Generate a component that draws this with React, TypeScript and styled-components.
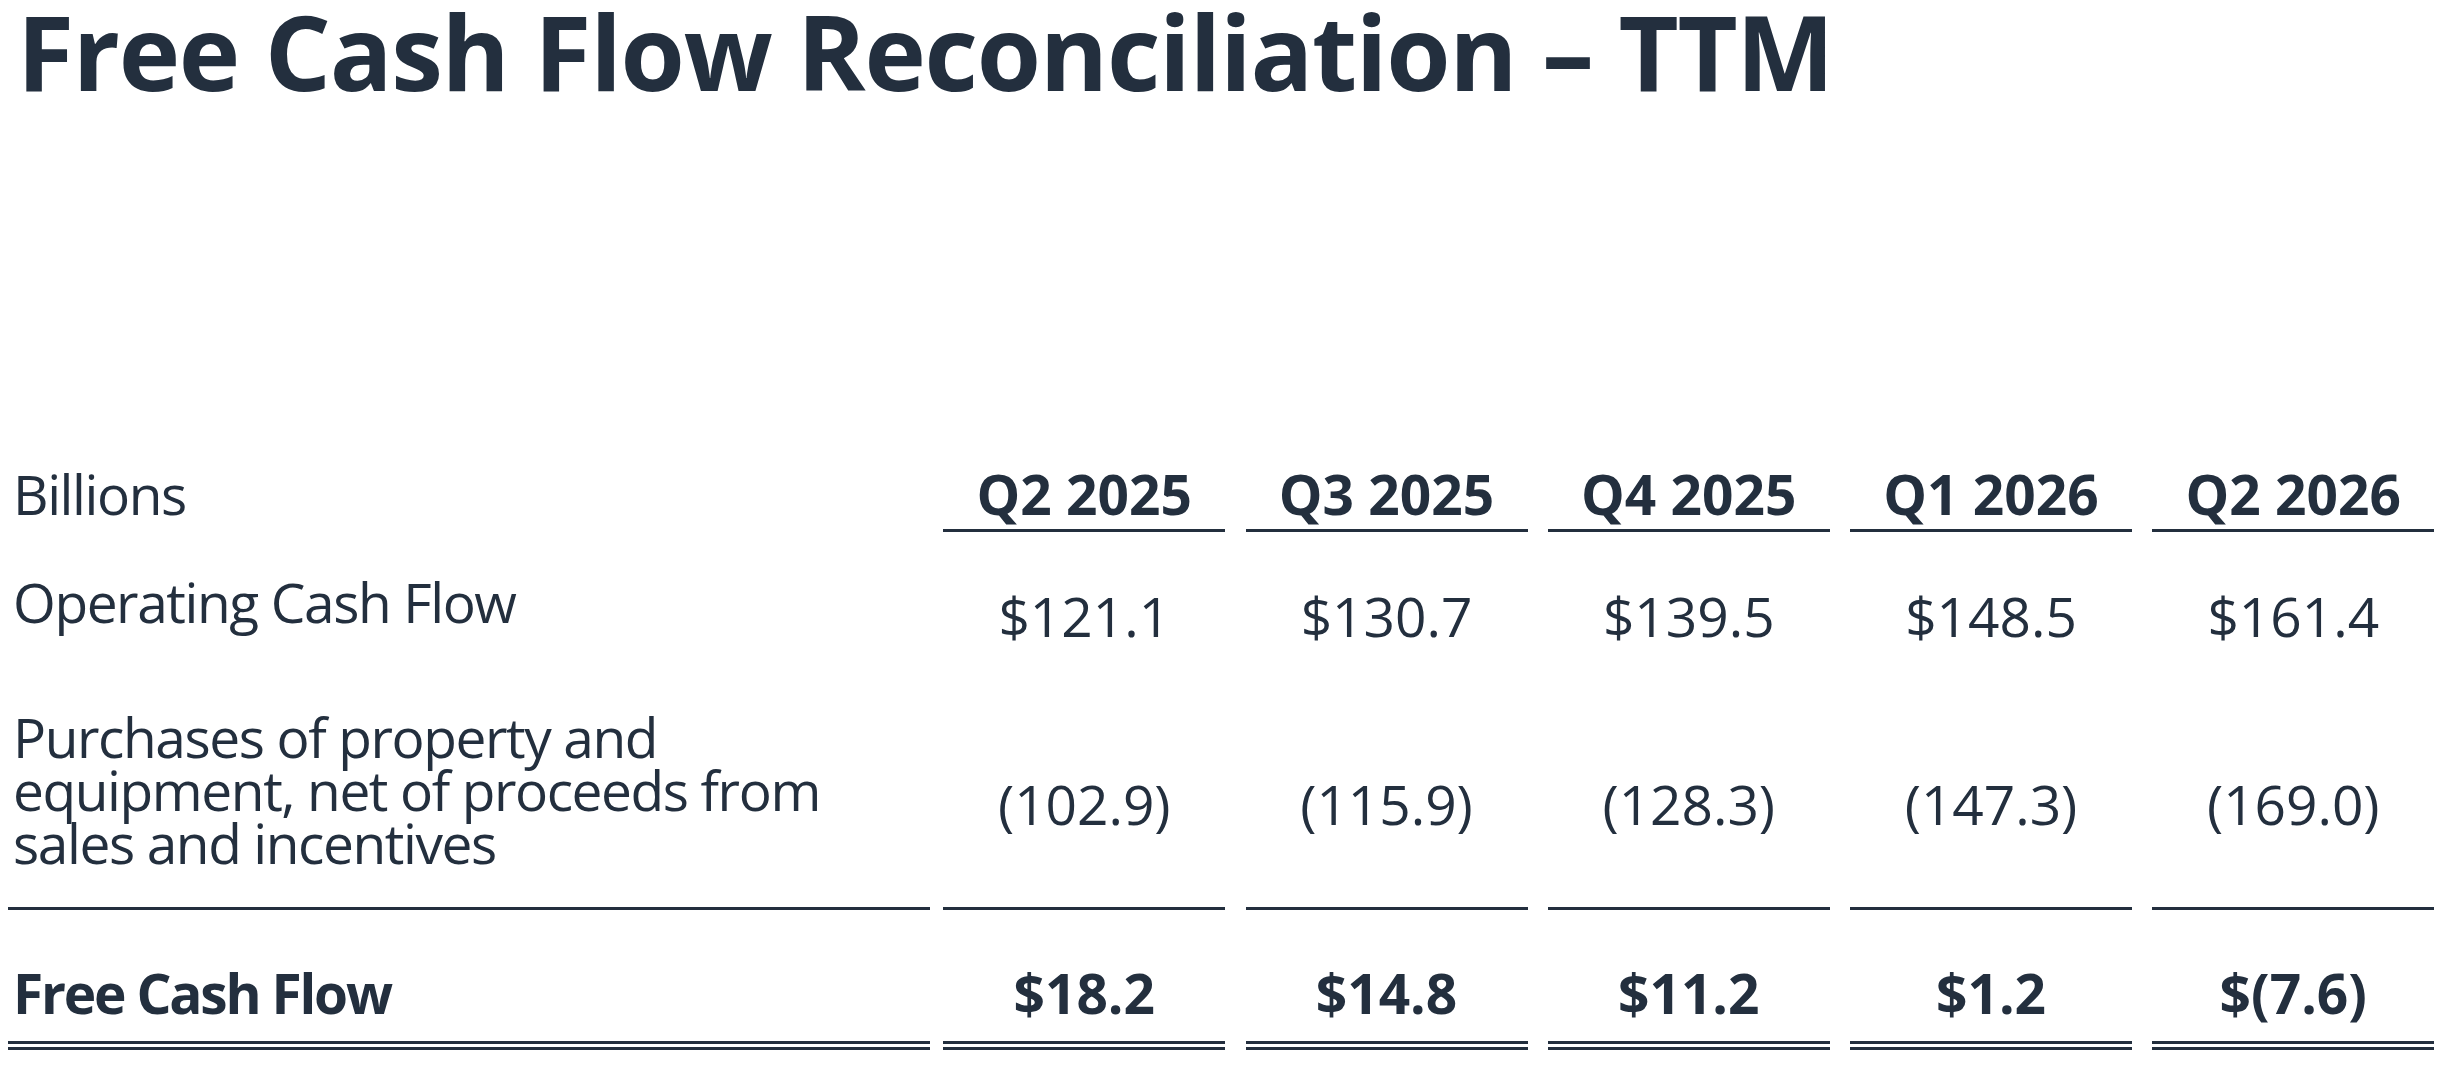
import styled, { createGlobalStyle } from 'styled-components'

type Rule = 'none' | 'blank' | 'single' | 'double'

const INK = '#232f3e'

const GlobalStyle = createGlobalStyle`
  html, body {
    margin: 0;
    padding: 0;
    background: #fff;
  }
  body {
    font-family: 'Open Sans', 'Liberation Sans', sans-serif;
    color: ${INK};
  }
`

const ruleCss = (r: Rule) => {
  if (r === 'single') return `3px solid ${INK}`
  if (r === 'double') return `9px double ${INK}`
  if (r === 'blank') return '3px solid transparent'
  return 'none'
}

const periods = ['Q2 2025', 'Q3 2025', 'Q4 2025', 'Q1 2026', 'Q2 2026']
const operating = ['$121.1', '$130.7', '$139.5', '$148.5', '$161.4']
const purchases = ['(102.9)', '(115.9)', '(128.3)', '(147.3)', '(169.0)']
const freeCash = ['$18.2', '$14.8', '$11.2', '$1.2', '$(7.6)']

const App = () => {
  return (
    <Page>
      <GlobalStyle />
      <Title>Free Cash Flow Reconciliation – TTM</Title>
      <Table>
        <Row $padBottom={9}>
          <LabelCell $rule="blank">Billions</LabelCell>
          {periods.map((p) => (
            <ValueCell key={p} $rule="single" $bold>
              {p}
            </ValueCell>
          ))}
        </Row>
        <Row $height={139}>
          <LabelCell $rule="none">Operating Cash Flow</LabelCell>
          {operating.map((v) => (
            <ValueCell key={v} $rule="none" $shift={28}>
              {v}
            </ValueCell>
          ))}
        </Row>
        <Row $height={239}>
          <LabelCell $rule="single">
            Purchases of property and
            <br />
            equipment, net of proceeds from
            <br />
            sales and incentives
          </LabelCell>
          {purchases.map((v) => (
            <ValueCell key={v} $rule="single" $shift={28}>
              {v}
            </ValueCell>
          ))}
        </Row>
        <Row $height={140} $padTop={34}>
          <LabelCell $rule="double" $bold>
            Free Cash Flow
          </LabelCell>
          {freeCash.map((v) => (
            <ValueCell key={v} $rule="double" $bold>
              {v}
            </ValueCell>
          ))}
        </Row>
      </Table>
    </Page>
  )
}

export default App

const Page = styled.div`
  width: 2446px;
  height: 1068px;
  overflow: hidden;
  box-sizing: border-box;
`
const Title = styled.h1`
  margin: 0;
  padding-left: 17px;
  font-size: 104px;
  line-height: 102px;
  font-weight: 700;
  letter-spacing: -1.3px;
  white-space: nowrap;
`
const Table = styled.div`
  margin-top: 365px;
  padding-left: 8px;
  display: flex;
  flex-direction: column;
`
const Row = styled.div<{ $height?: number; $padTop?: number; $padBottom?: number }>`
  display: grid;
  grid-template-columns: 915px repeat(5, 282px);
  column-gap: 20.25px;
  min-height: ${(p) => (p.$height ? `${p.$height}px` : 'auto')};

  & > * {
    padding-top: ${(p) => p.$padTop ?? 0}px;
    padding-bottom: ${(p) => p.$padBottom ?? 0}px;
  }
`
const Cell = styled.div<{ $rule: Rule; $bold?: boolean }>`
  box-sizing: border-box;
  display: flex;
  flex-direction: column;
  justify-content: center;
  border-bottom: ${(p) => ruleCss(p.$rule)};
  font-size: 55px;
  line-height: 53px;
  font-weight: ${(p) => (p.$bold ? 700 : 400)};
  white-space: nowrap;
`
const LabelCell = styled(Cell)`
  margin-right: -7px;
  padding-left: 5px;
  text-align: left;
  letter-spacing: ${(p) => (p.$bold ? '-2.2px' : '-1.4px')};
`
const ValueCell = styled(Cell)<{ $shift?: number }>`
  align-items: center;
  text-align: center;
  && {
    padding-top: ${(p) => (p.$shift ? `${p.$shift}px` : undefined)};
  }
`
